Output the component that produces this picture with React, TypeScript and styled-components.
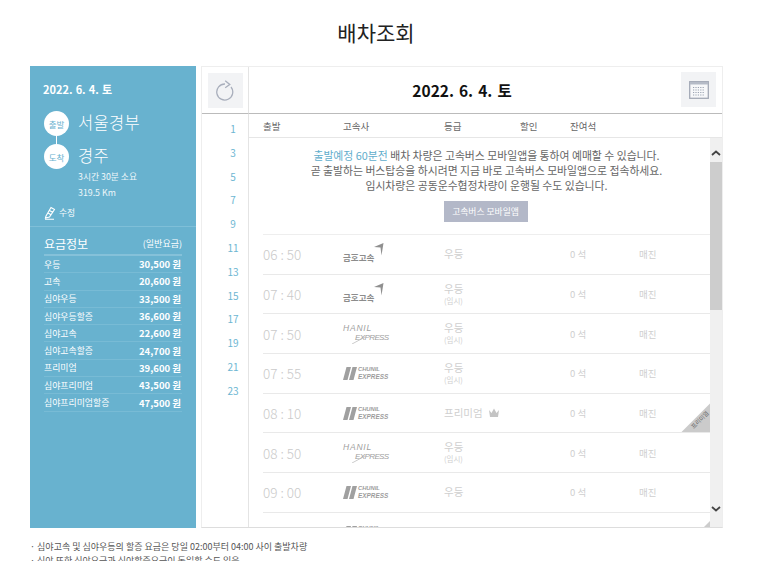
import React from "react";
import styled, { createGlobalStyle } from "styled-components";

const Global = createGlobalStyle`
  html, body { margin: 0; padding: 0; background: #fff; overflow: hidden; height: 561px; }
  body { font-family: "Noto Sans CJK KR", "Noto Sans", sans-serif; color: #555; }
  * { box-sizing: border-box; }
`;

const Page = styled.div`
  width: 773px; height: 561px; overflow: hidden; padding-left: 30px;
`;
const Title = styled.h1`
  margin: 0; width: 692px; height: 66px; padding-top: 17px; text-align: center;
  font-size: 21px; line-height: 30px; font-weight: 400; color: #222;
`;
const Board = styled.div`
  display: flex; gap: 5px; width: 693px; height: 462px;
`;
const Side = styled.aside`
  width: 166px; height: 100%; background: #68b2cf; color: #fff; display: flex; flex-direction: column;
`;
const SideTop = styled.div`
  height: 161px; padding: 15px 13px 0; border-bottom: 1px solid #7fbfd8;
`;
const SideDate = styled.div`
  font-size: 11px; line-height: 16px; font-weight: 700; margin-bottom: 14px; word-spacing: .6px;
`;
const Stop = styled.div`
  display: flex; align-items: flex-start; gap: 9px; height: 33px; position: relative; left: 1px;
`;
const Badge = styled.span`
  width: 25px; height: 25px; border-radius: 50%; background: #fff; color: #68b2cf;
  font-size: 8.5px; display: flex; align-items: center; justify-content: center; flex: none;
`;
const Connector = styled.div`
  width: 1px; height: 8px; background: #fff; margin: -8px 0 0 13px;
`;
const StopName = styled.span`
  font-size: 16.500px; line-height: 24px; font-weight: 300; letter-spacing: .3px; margin-top: -1px;
`;
const Meta = styled.div`
  margin: -8px 0 0 35px; font-size: 8.800px; line-height: 15.500px; font-weight: 400; color: #eef7fa;
`;
const Edit = styled.div`
  display: flex; align-items: center; gap: 3px; margin-top: 6px; margin-left: 1px; font-size: 8.800px; line-height: 14px; color: #f4fafc;
`;
const Fares = styled.div`
  padding: 0 14px 0 14px;
`;
const FareHead = styled.div`
  display: flex; justify-content: space-between; align-items: flex-end; height: 25px;
  padding-bottom: 2px; margin-top: 4px; border-bottom: 2px solid #85c1d9; font-size: 12px; line-height: 16px;
  span:last-child { font-size: 9px; font-weight: 400; }
`;
const FareRow = styled.div`
  display: flex; justify-content: space-between; align-items: center; height: 17.3px; padding-right: 1px;
  border-bottom: 1px solid #78bbd5; font-size: 8.900px;
  b { font-size: 9.500px; font-weight: 700; }
`;
const Main = styled.section`
  position: relative; width: 522px; height: 100%; border: 1px solid #eee; display: grid;
  grid-template-columns: 47px 1fr; grid-template-rows: 47px 1fr; border-bottom: 1px solid #ddd;
`;
const HeaderCell = styled.div`
  border-bottom: 1px solid #bbb; display: flex; align-items: center; justify-content: center;
`;
const RefreshCell = styled(HeaderCell)`
  border-right: 1px solid #e4e4e4;
`;
const DateCell = styled(HeaderCell)`
  position: relative; font-size: 15.500px; font-weight: 700; color: #111; padding-right: 47px; word-spacing: 1.500px;
`;
const SquareButton = styled.div`
  width: 35px; height: 35px; background: #f2f3f5; display: flex; align-items: center; justify-content: center;
`;
const CalendarSlot = styled.div`
  position: absolute; right: 6px; top: 5px;
`;
const Hours = styled.div`
  border-right: 1px solid #e4e4e4; padding-top: 3px; display: flex; flex-direction: column; align-items: flex-end; overflow: hidden;
`;
const Hour = styled.div`
  height: 23.8px; line-height: 23.8px; width: 30px; text-align: center; font-size: 10px; color: #6db6d2;
`;
const Content = styled.div`
  min-width: 0; overflow: hidden; display: flex; flex-direction: column;
`;
const Columns = styled.div`
  display: grid; grid-template-columns: 80px 101px 76px 50px 1fr; height: 24px; align-items: center;
  padding-left: 14px; font-size: 9.500px; color: #666; border-bottom: 1px solid #e6e6e6; flex: none;
`;
const Body = styled.div`
  flex: 1; min-height: 0; display: flex;
`;
const Scroller = styled.div`
  flex: 1; min-width: 0; overflow: hidden;
`;
const Notice = styled.div`
  height: 97px; margin-left: 14px; padding-top: 10px; text-align: center; font-size: 10.850px; line-height: 15px; color: #666;
  border-bottom: 1px solid #eee; white-space: nowrap;
  em { font-style: normal; color: #5fadcc; }
`;
const AppButton = styled.div`
  width: 84px; height: 21px; margin: 8px auto 0; background: #b3b8c8; color: #fff; font-size: 8.800px; line-height: 21px;
  position: relative; left: -1px;
`;
const Row = styled.div`
  position: relative; height: 39.7px; margin-left: 14px; border-bottom: 1px solid #e9e9e9;
  display: grid; grid-template-columns: 80px 101px 126px 69px 1fr; align-items: center; color: #cfcfcf;
`;
const Time = styled.div`font-size: 13.500px; font-weight: 300; color: #cacaca;`;
const Grade = styled.div`
  font-size: 10.500px; line-height: 12px; display: flex; flex-direction: column; align-items: flex-start;
  small { font-size: 7.500px; line-height: 11px; }
`;
const GradeLine = styled.div`display: flex; align-items: center; gap: 5px;`;
const Small = styled.div`font-size: 9.500px;`;
const Corner = styled.div`
  position: absolute; right: 0; bottom: 0; width: 29px; height: 29px; background: #cbcbcb;
  clip-path: polygon(100% 0, 100% 100%, 0 100%);
  span { position: absolute; left: 8px; top: 13px; font-size: 6px; line-height: 8px; color: #666; transform: rotate(-45deg); white-space: nowrap; }
`;
const ScrollTrack = styled.div`
  width: 12px; flex: none; background: #f0f0f0; display: flex; flex-direction: column; align-items: center;
`;
const Arrow = styled.div`height: 24px; display: flex; align-items: flex-end; justify-content: center; padding-bottom: 6px;`;
const Thumb = styled.div`width: 12px; height: 148px; background: #cdcdcd;`;
const Spacer = styled.div`flex: 1;`;
const ArrowLow = styled.div`height: 21px; display: flex; align-items: flex-start; justify-content: center;`;
const Grip = styled.div`
  position: absolute; right: 12px; bottom: 0; width: 6px; height: 6px; background: #ccc;
  clip-path: polygon(100% 0, 100% 100%, 0 100%);
`;
const Notes = styled.div`
  margin-top: 12px; width: 692px; font-size: 9px; line-height: 14px; color: #555;
`;
const LogoBox = styled.div`
  display: flex; align-items: center; height: 24px; color: #8e8e8e; font-style: italic; position: relative; width: 44px;
`;
const KumhoText = styled.span`
  font-size: 8.500px; font-weight: 700; font-style: normal; white-space: nowrap; color: #8c8c8c; margin-top: 5px;
`;
const KumhoWing = styled.svg`
  position: absolute; left: 31px; top: 0;
`;
const HanilTop = styled.span`
  position: absolute; left: 0; top: 1px; font-family: "Liberation Sans", sans-serif; font-size: 8.500px; letter-spacing: .8px; line-height: 10px; color: #a0a0a0; white-space: nowrap;
`;
const HanilBottom = styled.span`
  position: absolute; left: 12px; top: 11px; font-family: "Liberation Sans", sans-serif; font-size: 8px; letter-spacing: -.6px; line-height: 10px; color: #a0a0a0; white-space: nowrap;
`;
const HanilSwoosh = styled.svg`
  position: absolute; left: 9px; top: 14px;
`;
const ChunilBars = styled.svg`flex: none;`;
const ChunilText = styled.span`
  font-family: "Liberation Sans", sans-serif; font-weight: 700; font-size: 6.400px; line-height: 7.500px; white-space: nowrap; margin-left: 1px; color: #9c9c9c;
  display: flex; flex-direction: column; align-items: flex-start;
  span:first-child { font-size: 5.800px; }
`;

const Kumho = () => (
  <LogoBox>
    <KumhoText>금호고속</KumhoText>
    <KumhoWing width="10" height="14" viewBox="0 0 10 14"><path d="M0 5 L9.500 1 L7.500 13.500 L6.500 5.500 Z" fill="#8f8f8f" /></KumhoWing>
  </LogoBox>
);
const Hanil = () => (
  <LogoBox>
    <HanilTop>HANIL</HanilTop>
    <HanilBottom>EXPRESS</HanilBottom>
    <HanilSwoosh width="14" height="8" viewBox="0 0 14 8" fill="none" stroke="#b5b5b5" strokeWidth=".7"><path d="M0 8 L13 1" /></HanilSwoosh>
  </LogoBox>
);
const Chunil = () => (
  <LogoBox>
    <ChunilBars width="14" height="13" viewBox="0 0 14 13"><path d="M3.500 0H8L4.500 13H0ZM9.500 0H14L10.500 13H6Z" fill="#a0a0a0" /></ChunilBars>
    <ChunilText><span>CHUNIL</span><span>EXPRESS</span></ChunilText>
  </LogoBox>
);

const fares = [
  ["우등", "30,500 원"], ["고속", "20,600 원"], ["심야우등", "33,500 원"], ["심야우등할증", "36,600 원"],
  ["심야고속", "22,600 원"], ["심야고속할증", "24,700 원"], ["프리미엄", "39,600 원"], ["심야프리미엄", "43,500 원"],
  ["심야프리미엄할증", "47,500 원"],
];
const hours = [1, 3, 5, 7, 9, 11, 13, 15, 17, 19, 21, 23];
type Bus = { time: string; logo: React.ComponentType; grade: string; temp?: boolean; crown?: boolean; corner?: boolean };
const buses: Bus[] = [
  { time: "06 : 50", logo: Kumho, grade: "우등" },
  { time: "07 : 40", logo: Kumho, grade: "우등", temp: true },
  { time: "07 : 50", logo: Hanil, grade: "우등", temp: true },
  { time: "07 : 55", logo: Chunil, grade: "우등", temp: true },
  { time: "08 : 10", logo: Chunil, grade: "프리미엄", crown: true, corner: true },
  { time: "08 : 50", logo: Hanil, grade: "우등", temp: true },
  { time: "09 : 00", logo: Chunil, grade: "우등" },
  { time: "09 : 10", logo: Chunil, grade: "프리미엄", crown: true, corner: true },
];

export default function App() {
  return (
    <Page>
      <Global />
      <Title>배차조회</Title>
      <Board>
        <Side>
          <SideTop>
            <SideDate>2022. 6. 4. 토</SideDate>
            <Stop><Badge>출발</Badge><StopName>서울경부</StopName></Stop>
            <Connector />
            <Stop><Badge>도착</Badge><StopName>경주</StopName></Stop>
            <Meta>3시간 30분 소요<br />319.5 Km</Meta>
            <Edit>
              <svg width="12" height="14" viewBox="0 0 12 14" fill="none" stroke="#fff" strokeWidth="1.100">
                <path d="M2 10 L7 1.500 L10.500 3.500 L5.500 11 L1.500 12 Z M4 7 L7.500 9 M5.500 4.500 L9 6.500 M1 13.300 H10" />
              </svg>
              수정
            </Edit>
          </SideTop>
          <Fares>
            <FareHead><span>요금정보</span><span>(일반요금)</span></FareHead>
            {fares.map(([n, p]) => <FareRow key={n}><span>{n}</span><b>{p}</b></FareRow>)}
          </Fares>
        </Side>
        <Main>
          <RefreshCell>
            <SquareButton>
              <svg width="20" height="22" viewBox="0 0 20 22" fill="none" stroke="#a9afbc" strokeWidth="1.300">
                <path d="M10 5 A8 8 0 1 0 16 8" />
                <path d="M10.200 1.800 L14.800 5.500 L10.200 8.800" />
              </svg>
            </SquareButton>
          </RefreshCell>
          <DateCell>
            2022. 6. 4. 토
            <CalendarSlot>
              <SquareButton>
                <svg width="20" height="18" viewBox="0 0 20 18" fill="none">
                  <rect x=".7" y=".7" width="18.600" height="16.600" stroke="#a3a9b6" strokeWidth="1.300" fill="#f7f8fa" />
                  <rect x="1" y="1" width="18" height="2.500" fill="#b5bbc7" />
                  <path d="M4 6.500H16M4 9H16M4 11.500H16M4 14H16" stroke="#9aa2b1" strokeWidth="1.200" strokeDasharray="1.200 1.200" />
                </svg>
              </SquareButton>
            </CalendarSlot>
          </DateCell>
          <Hours>{hours.map(h => <Hour key={h}>{h}</Hour>)}</Hours>
          <Content>
            <Columns><span>출발</span><span>고속사</span><span>등급</span><span>할인</span><span>잔여석</span></Columns>
            <Body>
              <Scroller>
                <Notice>
                  <em>출발예정 60분전</em> 배차 차량은 고속버스 모바일앱을 통하여 예매할 수 있습니다.<br />
                  곧 출발하는 버스탑승을 하시려면 지금 바로 고속버스 모바일앱으로 접속하세요.<br />
                  임시차량은 공동운수협정차량이 운행될 수도 있습니다.
                  <AppButton>고속버스 모바일앱</AppButton>
                </Notice>
                {buses.map((b, i) => {
                  const Logo = b.logo;
                  return (
                    <Row key={i}>
                      <Time>{b.time}</Time>
                      <Logo />
                      <Grade>
                        <GradeLine>
                          {b.grade}
                          {b.crown && (
                            <svg width="12" height="10" viewBox="0 0 12 10"><path d="M1 2 L3.500 5 L6 0.500 L8.500 5 L11 2 L10 9 H2 Z" fill="#c4c4c4" /></svg>
                          )}
                        </GradeLine>
                        {b.temp && <small>(임시)</small>}
                      </Grade>
                      <Small>0 석</Small>
                      <Small>매진</Small>
                      {b.corner && <Corner><span>프리미엄</span></Corner>}
                    </Row>
                  );
                })}
              </Scroller>
              <ScrollTrack>
                <Arrow>
                  <svg width="10" height="6" viewBox="0 0 10 6" fill="none" stroke="#444" strokeWidth="1.800"><path d="M1 5 L5 1.500 L9 5" /></svg>
                </Arrow>
                <Thumb />
                <Spacer />
                <ArrowLow>
                  <svg width="10" height="6" viewBox="0 0 10 6" fill="none" stroke="#444" strokeWidth="1.800"><path d="M1 1 L5 4.500 L9 1" /></svg>
                </ArrowLow>
              </ScrollTrack>
            </Body>
          </Content>
          <Grip />
        </Main>
      </Board>
      <Notes>
        · 심야고속 및 심야우등의 할증 요금은 당일 02:00부터 04:00 사이 출발차량<br />
        · 심야 또한 심야요금과 심야할증요금이 동일할 수도 있음
      </Notes>
    </Page>
  );
}
